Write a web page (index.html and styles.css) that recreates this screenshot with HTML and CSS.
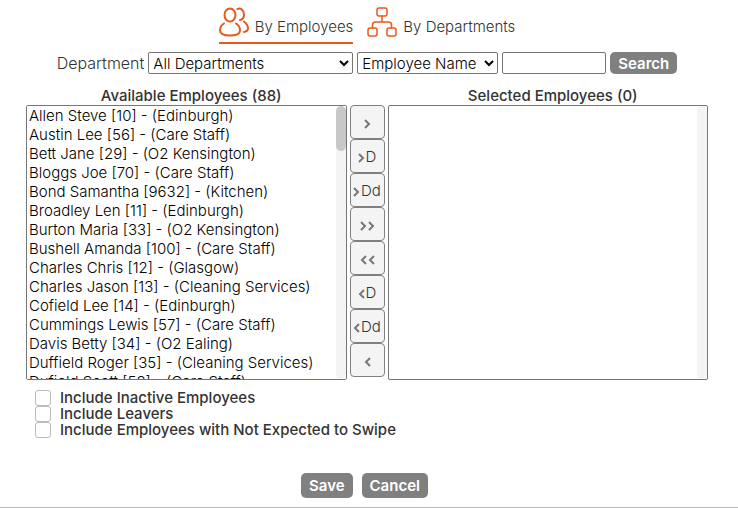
FILE: index.html
```html
<!DOCTYPE html>
<html lang="en">
<head>
    <meta charset="UTF-8">
    <meta name="viewport" content="width=device-width, initial-scale=1.0">
    <title>Select Employees</title>
    <link rel="stylesheet" href="styles.css">
</head>
<body>
    <form class="picker">
        <nav class="tabs">
            <a href="#employees" class="tab active">
                <svg class="tab-icon" viewBox="0 0 30 30" aria-hidden="true">
                    <ellipse cx="11" cy="8" rx="5.5" ry="6.5"/>
                    <path d="M5 16.500C2.500 18 1 20 1 23.500C1 27 5 28.500 11 28.500S21 27 21 23.500C21 20 19.500 18 17 16.500"/>
                    <path d="M18.500 2C22 0.500 25 3.500 25 7.500C25 10.500 23.500 12.500 21 13"/>
                    <path d="M25 14.500C27.500 16.500 29 18.500 29 21.500C29 23.500 27.500 24.500 25 25"/>
                </svg>
                <span>By Employees</span>
            </a>
            <a href="#departments" class="tab">
                <svg class="tab-icon thin" viewBox="0 0 30 30" aria-hidden="true">
                    <rect x="10" y="1" width="10" height="8" rx="2"/>
                    <rect x="1" y="21" width="9" height="8" rx="2"/>
                    <rect x="20" y="21" width="9" height="8" rx="2"/>
                    <path d="M15 9V15M5.500 21V18Q5.500 15 8.500 15H21.500Q24.500 15 24.500 18V21"/>
                </svg>
                <span>By Departments</span>
            </a>
        </nav>

        <div class="filters">
            <label for="department">Department</label>
            <select id="department" class="department">
                <option>All Departments</option>
            </select>
            <select class="field" aria-label="Search field">
                <option>Employee Name</option>
            </select>
            <input type="text" class="search-text" aria-label="Search text">
            <button type="button" class="btn search-btn">Search</button>
        </div>

        <div class="lists">
            <div class="list-column">
                <label for="available" class="list-title">Available Employees (88)</label>
                <div class="list-box has-more">
                    <select id="available" multiple>
                        <option>Allen Steve [10] - (Edinburgh)</option>
                        <option>Austin Lee [56] - (Care Staff)</option>
                        <option>Bett Jane [29] - (O2 Kensington)</option>
                        <option>Bloggs Joe [70] - (Care Staff)</option>
                        <option>Bond Samantha [9632] - (Kitchen)</option>
                        <option>Broadley Len [11] - (Edinburgh)</option>
                        <option>Burton Maria [33] - (O2 Kensington)</option>
                        <option>Bushell Amanda [100] - (Care Staff)</option>
                        <option>Charles Chris [12] - (Glasgow)</option>
                        <option>Charles Jason [13] - (Cleaning Services)</option>
                        <option>Cofield Lee [14] - (Edinburgh)</option>
                        <option>Cummings Lewis [57] - (Care Staff)</option>
                        <option>Davis Betty [34] - (O2 Ealing)</option>
                        <option>Duffield Roger [35] - (Cleaning Services)</option>
                        <option>Dufield Scott [58] - (Care Staff)</option>
                    </select>
                </div>
            </div>

            <div class="moves">
                <button type="button" aria-label="Add selected"><svg class="chevron" viewBox="0 0 7 10"><path d="M1 1L5 5L1 9"/></svg></button>
                <button type="button"><svg class="chevron" viewBox="0 0 7 10"><path d="M1 1L5 5L1 9"/></svg>D</button>
                <button type="button"><svg class="chevron" viewBox="0 0 7 10"><path d="M1 1L5 5L1 9"/></svg>Dd</button>
                <button type="button" aria-label="Add all"><svg class="chevron" viewBox="0 0 7 10"><path d="M1 1L5 5L1 9"/></svg><svg class="chevron" viewBox="0 0 7 10"><path d="M1 1L5 5L1 9"/></svg></button>
                <button type="button" aria-label="Remove all"><svg class="chevron" viewBox="0 0 7 10"><path d="M6 1L2 5L6 9"/></svg><svg class="chevron" viewBox="0 0 7 10"><path d="M6 1L2 5L6 9"/></svg></button>
                <button type="button"><svg class="chevron" viewBox="0 0 7 10"><path d="M6 1L2 5L6 9"/></svg>D</button>
                <button type="button"><svg class="chevron" viewBox="0 0 7 10"><path d="M6 1L2 5L6 9"/></svg>Dd</button>
                <button type="button" aria-label="Remove selected"><svg class="chevron" viewBox="0 0 7 10"><path d="M6 1L2 5L6 9"/></svg></button>
            </div>

            <div class="list-column">
                <label for="selected" class="list-title">Selected Employees (0)</label>
                <div class="list-box">
                    <select id="selected" multiple></select>
                </div>
            </div>
        </div>

        <div class="options">
            <label><input type="checkbox">Include Inactive Employees</label>
            <label><input type="checkbox">Include Leavers</label>
            <label><input type="checkbox">Include Employees with Not Expected to Swipe</label>
        </div>

        <div class="actions">
            <button type="submit" class="btn">Save</button>
            <button type="button" class="btn">Cancel</button>
        </div>
    </form>
</body>
</html>
```
FILE: styles.css
```css
* {
    margin: 0;
    padding: 0;
    box-sizing: border-box;
}

body {
    font-family: Inter, "Open Sans", sans-serif;
    font-size: 15px;
    font-weight: 300;
    color: #333;
    background: #fff;
}

input, select, button {
    font: inherit;
}

.picker {
    padding: 6px 30px 9px 26px;
    border-bottom: 1px solid #bbb;
}

.tabs {
    display: flex;
    justify-content: center;
    gap: 14px;
}

.tab {
    display: flex;
    align-items: center;
    gap: 6px;
    height: 38px;
    padding-bottom: 4px;
    border-bottom: 2px solid transparent;
    line-height: 20px;
    color: #333;
    text-decoration: none;
}

.tab span {
    padding-top: 10px;
}

.tab.active {
    border-bottom-color: #e9591b;
}

.tab-icon {
    width: 30px;
    height: 30px;
    fill: none;
    stroke: #e9591b;
    stroke-width: 2;
    stroke-linecap: round;
}

.tab-icon.thin {
    stroke-width: 1.5;
}

.filters {
    display: flex;
    justify-content: center;
    align-items: center;
    gap: 4px;
    height: 22px;
    margin-top: 8px;
}

.filters label {
    font-size: 16px;
}

.filters select,
.search-text {
    height: 22px;
    border: 1px solid #767676;
    border-radius: 2px;
    background: #fff;
    color: #000;
}

.department {
    width: 205px;
}

.field {
    width: 141px;
}

.search-text {
    width: 104px;
    padding: 0 4px;
}

.btn {
    height: 25px;
    padding: 0 8px;
    border: none;
    border-radius: 5px;
    background: #808080;
    color: #fff;
    font-weight: 600;
}

.search-btn {
    height: 22px;
}

.lists {
    display: flex;
    align-items: flex-end;
    gap: 3px;
    margin-top: 13px;
}

.list-column {
    flex: 1;
    min-width: 0;
}

.list-title {
    display: block;
    line-height: 18px;
    padding-left: 10px;
    text-align: center;
    font-weight: 500;
}

.list-box {
    position: relative;
}

.list-box select {
    display: block;
    width: 100%;
    height: 275px;
    border: 1px solid #767676;
    border-radius: 2px;
    background: #fff;
    color: #000;
    scrollbar-width: none;
}

.list-box option {
    height: 19px;
    min-height: 19px;
    padding: 0 2px;
    line-height: 18px;
    font-weight: 300;
}

/* slim scrollbar track and thumb over the list's right edge */
.list-box::before,
.list-box.has-more::after {
    content: "";
    position: absolute;
    top: 1px;
    right: 1px;
    width: 10px;
    border-radius: 5px;
    pointer-events: none;
}

.list-box::before {
    bottom: 1px;
    background: #f4f4f4;
}

.list-box.has-more::after {
    height: 45px;
    background: #c8c8c8;
}

.moves {
    flex: none;
    width: 35px;
    height: 275px;
}

.moves button {
    display: flex;
    justify-content: center;
    align-items: center;
    gap: 1px;
    width: 100%;
    height: 34px;
    border: 1px solid #808080;
    border-radius: 4px;
    background: #f4f4f4;
    color: #333;
}

.chevron {
    flex: none;
    width: 7px;
    height: 10px;
    margin-top: 4px;
    fill: none;
    stroke: #777;
    stroke-width: 2;
}

.options {
    padding: 10px 9px 0;
    line-height: 16px;
    font-weight: 500;
}

.options label {
    display: flex;
    align-items: center;
    gap: 9px;
    height: 16px;
}

.options input {
    appearance: none;
    width: 16px;
    height: 16px;
    border: 1px solid #bbb;
    border-radius: 3px;
    background: #fff;
}

.options input:checked {
    background: #e9591b;
}

.actions {
    display: flex;
    justify-content: center;
    gap: 9px;
    margin-top: 35px;
    padding-right: 5px;
}
```
